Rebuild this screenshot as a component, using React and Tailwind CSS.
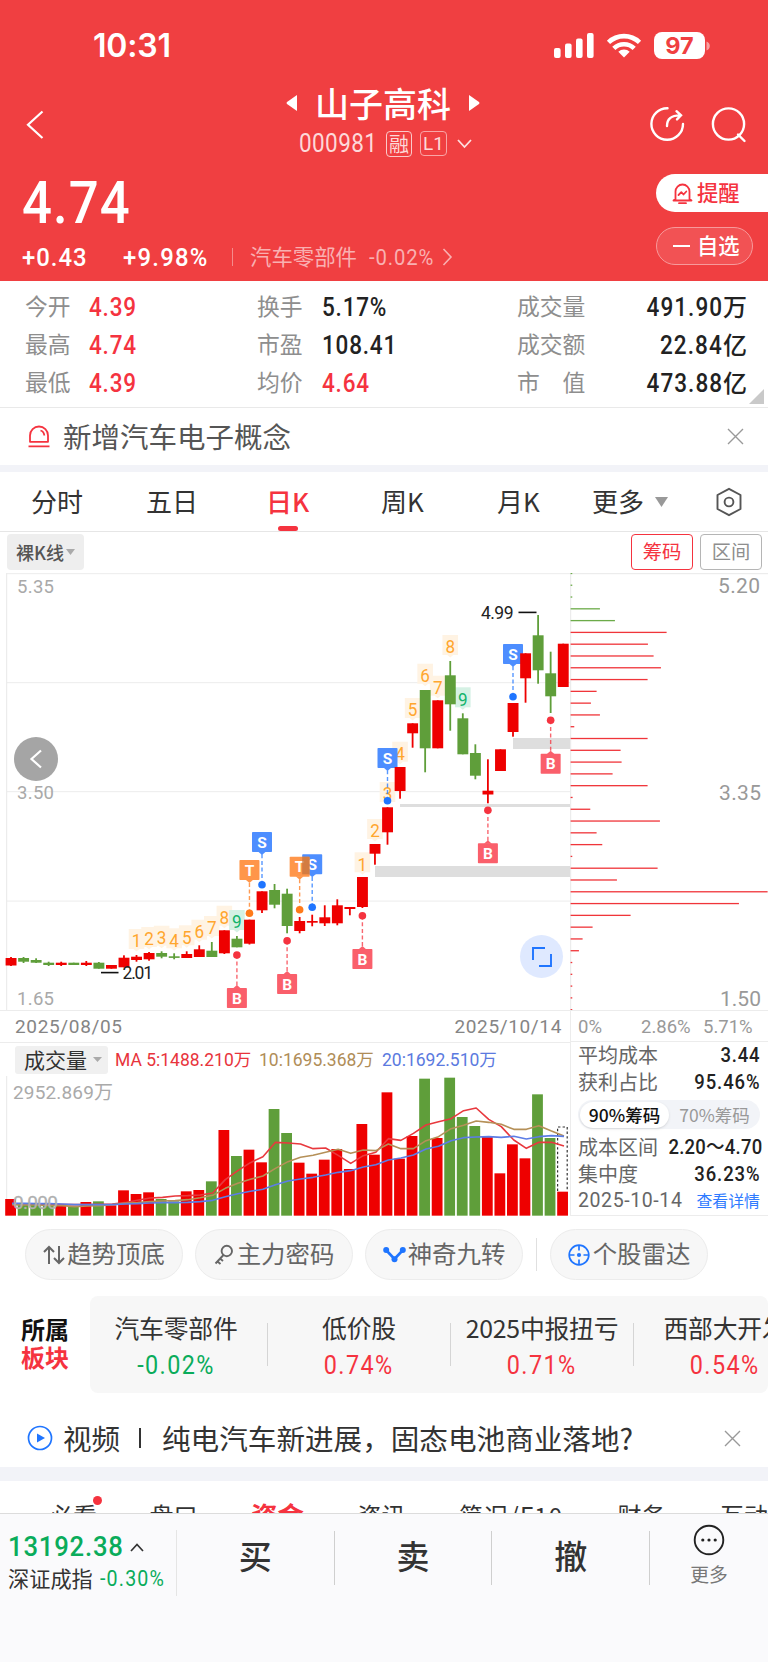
import React from "react";

const CN = "font-['Noto_Sans_CJK_SC',sans-serif]";
const NUM = "font-['Roboto','Noto_Sans_CJK_SC',sans-serif]";
const SLIM = "font-['Roboto','Noto_Sans_CJK_SC',sans-serif] origin-left scale-x-90 whitespace-nowrap";

const RED = "#ee0000";
const GREEN = "#5f9e3a";

// [direction, high, bodyTop, bodyBottom, low]
const candles = [
  ["r", 957, 958, 965.5, 966], ["g", 957, 958, 961.7, 963], ["g", 958.3, 960, 962.7, 963], ["g", 961.7, 962.7, 965, 966],
  ["r", 961.7, 962.7, 965, 966], ["g", 962.7, 962.7, 965, 965], ["r", 961, 962.7, 965, 966], ["g", 962, 962.7, 968.7, 968.7],
  ["r", 965, 965, 968.7, 968.7], ["r", 955.3, 957.7, 967.3, 967.3], ["r", 955, 956.7, 960, 961.7], ["r", 952, 953, 959.3, 960.7],
  ["g", 951.3, 953, 956.7, 958.3], ["g", 953.3, 956.3, 957.9, 959.3], ["r", 951.3, 954, 958, 958], ["r", 945.3, 949.3, 957, 957],
  ["g", 942, 950.7, 957, 957], ["r", 930.3, 930.3, 953.3, 954], ["g", 936, 938.7, 947.3, 947.3], ["r", 919.7, 919.7, 943.7, 944.5],
  ["r", 891.3, 891.3, 910.3, 913], ["g", 884, 890, 904.7, 908.3], ["g", 888.7, 893.7, 926, 933.3], ["r", 917, 921, 931, 933.3],
  ["r", 914.7, 921, 922.7, 926.3], ["r", 905.3, 917.3, 923.3, 926], ["r", 899.3, 905.3, 923.3, 925.3], ["r", 907, 907, 909, 915.3],
  ["r", 877, 877, 907, 908], ["r", 844, 844, 853.7, 864.7], ["r", 807.3, 807.3, 832.3, 844.7], ["r", 767, 767, 791, 798.7],
  ["r", 723.3, 723.3, 733.3, 747.7], ["g", 690, 690, 748.3, 772.3], ["r", 700.3, 700.3, 748.3, 748.3], ["g", 661, 675.3, 704.3, 730.7],
  ["g", 713.3, 718.3, 754.3, 754.3], ["g", 744.3, 753, 775.7, 779.3], ["r", 759.3, 790.7, 794.5, 803.3], ["r", 749.3, 749.3, 771, 771],
  ["r", 703, 703, 732, 736.7], ["r", 653.3, 653.3, 678.3, 702.7], ["g", 615, 635.3, 670.3, 683.7], ["g", 651.7, 673.3, 696.3, 713],
  ["r", 643.7, 643.7, 687, 687],
];

// [candle index, digit, top]
const counts = [
  [10, 1, 929], [11, 2, 927], [12, 3, 925.7], [13, 4, 928.3], [14, 5, 925.3], [15, 6, 919.7], [16, 7, 916], [17, 8, 905.7], [18, 9, 910],
  [28, 1, 852.3], [29, 2, 819], [30, 3, 782], [31, 4, 741.7], [32, 5, 698], [33, 6, 663.7], [34, 7, 675.7], [35, 8, 635], [36, 9, 687.3],
];

// [candle index, letter, top, dotY]
const badges = [
  [18, "B", 988, 955], [19, "T", 860, 913.3], [20, "S", 832, 884.7], [22, "B", 974, 940.7], [24, "S", 854.3, 907.3], [23, "T", 856.7, 909.7],
  [28, "B", 949, 915.7], [30, "S", 748, 800.7], [38, "B", 843.3, 810.3], [40, "S", 644, 696.7], [43, "B", 753.7, 720.3],
];
const badgeColor = { B: ["#fa5f6b", "#f5333f"], S: ["#4d8eff", "#1f75ff"], T: ["#ff964a", "#ff7a1a"] };

const cx = (i) => 11 + 12.55 * i;

function PriceChart() {
  return (
    <svg className="block font-['Roboto',sans-serif]" width="570" height="437" viewBox="0 573 570 437">
      {[573.5, 682.5, 791.5, 901].map((y) => (
        <rect key={y} x="6" y={y - 0.5} width="564" height="1.2" fill="#efefef" />
      ))}
      <rect x="6" y="573" width="1.2" height="437" fill="#ececec" />
      <rect x="375" y="866" width="195" height="11" fill="#dedede" />
      <rect x="400" y="804" width="170" height="3" fill="#dedede" />
      <rect x="513" y="738" width="57" height="11" fill="#dedede" />
      <g fill="#a9a9a9" fontSize="18.5">
        <text x="17" y="593.2" textLength="37">5.35</text>
        <text x="17" y="799.2" textLength="37">3.50</text>
        <text x="17" y="1005.2" textLength="37">1.65</text>
      </g>
      {counts.map(([i, n, top]) => (
        <g key={i}>
          <rect x={cx(i) - 7.8} y={top} width="15.6" height="20" fill={n === 9 ? "#d5f1e4" : "#fff3e3"} />
          <path d={`M${cx(i) - 3} ${top + 20}h6l-3 2.5z`} fill={n === 9 ? "#d5f1e4" : "#fff3e3"} />
        </g>
      ))}
      {counts.map(([i, n, top]) => (
        <g key={i} transform={`translate(${cx(i)} ${top + 18.3}) scale(0.9 1)`}>
          <text textAnchor="middle" fontSize="19" fill={n === 9 ? "#12b36b" : "#ffa62e"}>{n}</text>
        </g>
      ))}
      {badges.map(([i, k, top, dot]) => {
        const x = cx(i);
        const up = k === "B";
        return (
          <g key={i}>
            <line x1={x} x2={x} y1={dot} y2={up ? top : top + 20} stroke={badgeColor[k][1]} strokeOpacity=".75" strokeWidth="1.4" strokeDasharray="4 2.6" />
            <path d={up ? `M${x - 4} ${top + 0.5}l4-3.5l4 3.5z` : `M${x - 4} ${top + 19.5}l4 3.5l4-3.5z`} fill={badgeColor[k][0]} />
            <rect x={x - 10} y={top} width="20" height="20" rx="0.8" fill={badgeColor[k][0]} />
            <text x={x} y={top + 15.6} textAnchor="middle" fontSize="15.5" fontWeight="700" fill="#fff">{k}</text>
            <circle cx={x} cy={dot} r="3.8" fill={badgeColor[k][1]} />
          </g>
        );
      })}
      <rect x={cx(24) - 10} y="856.7" width="7.2" height="17.6" fill="#c8753f" fillOpacity=".8" />
      {candles.map(([d, h, t, b, l], i) => (
        <g key={i} fill={d === "r" ? RED : GREEN}>
          <rect x={cx(i) - 0.9} y={h} width="1.8" height={l - h} />
          <rect x={cx(i) - 5.4} y={t} width="10.9" height={b - t} />
        </g>
      ))}
      <rect x="518.5" y="611.6" width="18" height="1.6" fill="#111" />
      <text x="481" y="618.8" fontSize="17.5" textLength="32.5" fill="#222">4.99</text>
      <rect x="101" y="971.8" width="17.5" height="1.6" fill="#111" />
      <text x="122.5" y="979.4" fontSize="17.5" textLength="30.5" fill="#222">2.01</text>
    </svg>
  );
}

const chipEnds = [37, 37, 37, 120, 165, 320, 264, 281, 303, 263, 110, 93, 120, 43, 263, 182, 185, 158, 263, 38, 91, 300, 110, 127, 37, 293, 171, 623, 537, 212, 98, 68, 57, 37, 37, 37, 37, 37];

function ChipChart() {
  return (
    <svg className="block font-['Roboto',sans-serif]" width="198" height="437" viewBox="570 573 198 437">
      <rect x="570" y="573" width="198" height="1.2" fill="#ececec" />
      <rect x="570" y="573" width="1.2" height="437" fill="#ececec" />
      {chipEnds.map((e, i) => (
        <rect key={i} x="570.6" y={572.8 + i * 11.79} width={(e - 32) / 3} height="1.3" fill={i < 5 ? "#6cab49" : "#f0353a"} />
      ))}
      <g fill="#999" fontSize="21">
        <text x="718" y="593.4" textLength="42">5.20</text>
        <text x="719" y="799.7" textLength="42">3.35</text>
        <text x="720" y="1005.8" textLength="41">1.50</text>
      </g>
    </svg>
  );
}

const volumes = [567, 585, 583, 585, 588, 590, 576, 574, 586, 541, 552, 547, 567, 574, 544, 540, 514, 360, 438, 419, 457, 297, 369, 458, 491, 449, 417, 477, 342, 434, 247, 446, 378, 206, 384, 203, 321, 348, 380, 490, 403, 445, 253, 384, 545];
const ma5 = [582, 582, 582, 583, 584, 584, 584, 583, 582, 578, 571, 564, 562, 558, 557, 555, 549, 509, 482, 458, 440, 397, 399, 402, 416, 414, 436, 460, 437, 427, 386, 391, 370, 345, 335, 326, 302, 294, 328, 350, 390, 415, 397, 397, 408];
const ma10 = [584, 585, 585, 586, 587, 590, 588, 587, 584, 580, 578, 575, 573, 572, 569, 563, 556, 535, 520, 508, 498, 475, 455, 442, 436, 427, 418, 430, 420, 422, 402, 416, 416, 392, 380, 356, 346, 333, 337, 343, 358, 358, 347, 363, 378];
const ma20 = [580, 580, 581, 581, 582, 584, 584, 584, 584, 582, 581, 579, 578, 578, 577, 575, 571, 560, 551, 544, 538, 524, 513, 507, 502, 495, 487, 482, 471, 464, 450, 444, 435, 417, 409, 392, 383, 381, 380, 382, 379, 387, 380, 377, 379];
const vx = (i) => 10.5 + 12.545 * i;
const line = (a) => a.map((v, i) => `${vx(i) + 1.5},${1010 + v / 3}`).join(" ");

function VolumeChart() {
  return (
    <svg className="block font-['Roboto','Noto_Sans_CJK_SC',sans-serif]" width="570" height="140" viewBox="0 1076 570 140">
      <rect x="6" y="1076" width="1.2" height="140" fill="#ececec" />
      <text x="13" y="1098.6" fontSize="19" textLength="100" fill="#aaa">2952.869万</text>
      {volumes.map((v, i) => (
        <rect key={i} x={vx(i) - 5.3} y={1010 + v / 3} width="10.8" height={(617 - v) / 3} fill={candles[i][0] === "r" ? RED : GREEN} />
      ))}
      <path d="M557.6 1191V1127h9.6v64" fill="none" stroke="#333" strokeWidth="1.2" strokeDasharray="2.4 2.2" />
      <g fill="none" strokeWidth="1.6" strokeLinejoin="round">
        <polyline points={line(ma5)} stroke="#e8393e" />
        <polyline points={line(ma10)} stroke="#b59058" />
        <polyline points={line(ma20)} stroke="#5c7de6" />
      </g>
      <text x="13" y="1209" fontSize="19" textLength="45" fill="#b0b0b0" stroke="#b0b0b0" strokeWidth="0.3">0.000</text>
    </svg>
  );
}

function Header() {
  return (
    <header className="flex h-[281px] shrink-0 flex-col bg-[#f03f41] text-white">
      <div className="flex h-[85px] items-center pt-[6px] pr-[58px] pl-[93px]">
        <span className="font-['Inter',sans-serif] text-[32px] leading-none font-semibold tracking-[-0.2px]">10:31</span>
        <svg className="ml-auto" width="156" height="28" viewBox="553 32 156 28" fill="#fff">
          <rect x="553" y="48" width="6.6" height="10" rx="2" />
          <rect x="564" y="43.5" width="6.6" height="14.5" rx="2" />
          <rect x="575" y="38.5" width="6.6" height="19.5" rx="2" />
          <rect x="586" y="33" width="6.6" height="25" rx="2" />
          <g fill="none" stroke="#fff" strokeWidth="4.6">
            <path d="M607.5 42.3A22.5 22.5 0 0 1 638.5 42.3" />
            <path d="M612.8 48.3A14.8 14.8 0 0 1 633.2 48.3" />
          </g>
          <path d="M623 57.6L617.3 51.8A8.2 8.2 0 0 1 628.7 51.8Z" />
          <rect x="653" y="32" width="51" height="27" rx="8" />
          <path d="M705.5 41.5c4.4 1 4.4 8 0 9z" opacity=".5" />
          <text x="678.5" y="54" textAnchor="middle" fontSize="23.5" fontWeight="700" fill="#f03f41" className="font-['Inter',sans-serif]">97</text>
        </svg>
      </div>
      <div className="flex h-[80px] items-start">
        <svg className="mt-[24px] ml-[24px]" width="22" height="32" fill="none" stroke="#fff" strokeWidth="2.2"><path d="M18.5 2.5L4 15.7L18.5 29" /></svg>
        <div className="ml-[217px] flex w-[240px] flex-col items-center">
          <div className="flex h-[35px] w-[194px] items-center justify-between">
            <svg width="11" height="16" fill="#fff"><path d="M11 0V16L1 9q-1-1 0-2z" /></svg>
            <span className={`${CN} text-[34px] leading-none font-medium whitespace-nowrap`}>山子高科</span>
            <svg width="11" height="16" fill="#fff"><path d="M0 0V16L10 9q1-1 0-2z" /></svg>
          </div>
          <div className="mt-[10px] flex h-[27px] items-center pl-[5px] text-[#fdd9d9]">
            <span className={`${SLIM} w-[87px] text-[25px] leading-none tracking-[0.45px]`}>000981</span>
            <span className={`${CN} flex h-[26px] w-[26px] items-center justify-center rounded-[4px] border border-[#fbc9c9] text-[20px] leading-none`}>融</span>
            <span className={`${NUM} ml-[8px] flex h-[25px] w-[27px] items-center justify-center rounded-[4px] border border-[#f9a5a6] text-[19px] leading-none`}>L1</span>
            <svg className="ml-[10px]" width="15" height="10" fill="none" stroke="#fde0e0" strokeWidth="1.8"><path d="M1 1L7.5 8L14 1" /></svg>
          </div>
        </div>
        <svg className="mt-[20px] ml-[145px]" width="100" height="38" viewBox="648 105 100 38" fill="none" stroke="#fff" strokeWidth="2.4" strokeLinecap="round">
          <path d="M667.5 108.2A15.8 15.8 0 1 0 683 124" />
          <path d="M667 126C667 119 671 115.4 680 115.4M676.5 111.2L681 115.4L677 119.4" />
          <circle cx="728.5" cy="124" r="15.6" />
          <path d="M738 134.5L744.5 141" />
        </svg>
      </div>
      <div className="flex flex-1">
        <div className="flex flex-1 flex-col">
          <span className={`${SLIM} mt-[9px] ml-[22px] text-[58.5px] leading-[58px] font-medium tracking-[1.2px]`}>4.74</span>
          <div className="mt-[11px] flex h-[28px] items-center pl-[22px]">
            <span className={`${SLIM} w-[101px] text-[26.5px] leading-none font-medium tracking-[1.1px]`}>+0.43</span>
            <span className={`${SLIM} w-[109px] text-[26.5px] leading-none font-medium tracking-[1.4px]`}>+9.98%</span>
            <span className="h-[18px] w-px bg-[#f58b8c]" />
            <span className={`${CN} ml-[17px] w-[119px] pb-[2px] text-[21.4px] leading-none whitespace-nowrap text-[#f9b0b1]`}>汽车零部件</span>
            <span className={`${SLIM} w-[73px] text-[22.5px] leading-none tracking-[1px] text-[#f9b0b1]`}>-0.02%</span>
            <svg width="11" height="18" fill="none" stroke="#f9b0b1" strokeWidth="1.6"><path d="M1.5 1L9 9L1.5 17" /></svg>
          </div>
        </div>
        <div className="mt-[9px] flex w-[112px] flex-col gap-[15px]">
          <div className="flex h-[38px] items-center rounded-l-full bg-white pl-[16px] text-[#f5333f]">
            <svg width="21" height="23" viewBox="0 0 21 23" fill="none" stroke="#f5333f" strokeWidth="1.8" strokeLinecap="round" strokeLinejoin="round">
              <path d="M3.5 17V9.5A7 7 0 0 1 17.5 9.5V17L19.5 18.5H1.5Z" /><path d="M7 21.2H14" /><path d="M6.5 13L9.3 10.2L11.5 12.5L14.3 9.5" />
            </svg>
            <span className={`${CN} ml-[4px] pb-[2px] text-[21.3px] leading-none font-medium`}>提醒</span>
          </div>
          <div className="flex h-[38px] w-[97px] items-center rounded-full border border-[#f79a9b] bg-[#f25254] pl-[16px]">
            <span className="h-[2px] w-[17px] bg-white" />
            <span className={`${CN} ml-[7px] pb-[2px] text-[21.3px] leading-none font-medium`}>自选</span>
          </div>
        </div>
      </div>
    </header>
  );
}

const stats = [
  ["今开", "4.39", true, "换手", "5.17%", false, "成交量", "491.90", "万"],
  ["最高", "4.74", true, "市盈", "108.41", false, "成交额", "22.84", "亿"],
  ["最低", "4.39", true, "均价", "4.64", true, "市　值", "473.88", "亿"],
];

function Stats() {
  return (
    <section className="relative flex h-[127px] shrink-0 flex-col border-b border-[#e9e9e9] pt-[6px]">
      {stats.map((r, i) => (
        <div key={i} className="flex h-[38px] items-center pr-[21px] pl-[25px] whitespace-nowrap">
          <span className={`${CN} w-[64px] text-[22.8px] leading-none text-[#8e8e8e]`}>{r[0]}</span>
          <span className={`${SLIM} w-[168px] pt-[2px] text-[25px] leading-none font-medium tracking-[0.9px] ${r[2] ? "text-[#f5333f]" : "text-[#222]"}`}>{r[1]}</span>
          <span className={`${CN} w-[65px] text-[22.8px] leading-none text-[#8e8e8e]`}>{r[3]}</span>
          <span className={`${SLIM} w-[195px] pt-[2px] text-[25px] leading-none font-medium tracking-[0.9px] ${r[5] ? "text-[#f5333f]" : "text-[#222]"}`}>{r[4]}</span>
          <span className={`${CN} text-[22.8px] leading-none text-[#8e8e8e]`}>{r[6]}</span>
          <span className="ml-auto flex items-center leading-none text-[#222]">
            <span className="origin-right scale-x-90 pt-[2px] font-['Roboto',sans-serif] text-[25px] font-medium tracking-[1.2px]">{r[7]}</span>
            <span className={`${CN} text-[24px] font-medium`}>{r[8]}</span>
          </span>
        </div>
      ))}
      <svg className="absolute right-[4px] bottom-[3px]" width="15" height="15" fill="#c9c9c9"><path d="M15 0V15H0Z" /></svg>
    </section>
  );
}

function Cross() {
  return <svg width="17" height="17" fill="none" stroke="#999" strokeWidth="1.4"><path d="M1 1L16 16M16 1L1 16" /></svg>;
}

function Tabs() {
  const t = `${CN} text-[26px] leading-none text-[#333] whitespace-nowrap pb-[2px]`;
  return (
    <nav className="flex h-[60px] shrink-0 items-center border-b border-[#e6e6e6] pl-[31px]">
      <span className={`${t} w-[115px]`}>分时</span>
      <span className={`${t} w-[120px]`}>五日</span>
      <span className="relative flex h-full w-[115px] items-center">
        <span className={`${CN} pb-[2px] text-[26px] leading-none font-medium text-[#f5333f]`}>日K</span>
        <span className="absolute bottom-0 left-[12px] h-[5px] w-[20px] rounded-[2.5px] bg-[#f5333f]" />
      </span>
      <span className={`${t} w-[116px]`}>周K</span>
      <span className={`${t} w-[95px]`}>月K</span>
      <span className={`${t} w-[63px]`}>更多</span>
      <svg width="13" height="10" fill="#999"><path d="M0 0H13L6.5 10Z" /></svg>
      <svg className="ml-[47px]" width="28" height="30" viewBox="0 0 28 30" fill="none" stroke="#555" strokeWidth="1.9" strokeLinejoin="round">
        <path d="M14 1.8L25.5 8V22L14 28.2L2.5 22V8Z" /><circle cx="14" cy="15" r="4.4" />
      </svg>
    </nav>
  );
}

function ChipPanel() {
  const label = `${CN} pb-[1px] text-[20px] leading-none text-[#666]`;
  const val = "font-['Roboto','Noto_Sans_CJK_SC',sans-serif] origin-right scale-x-90 text-[20.5px] leading-none font-medium text-[#222]";
  return (
    <div className="flex h-[174px] flex-col border-b border-l border-[#ececec] pr-[8px] pl-[7px] whitespace-nowrap">
      <div className="flex h-[27px] items-center justify-between"><span className={label}>平均成本</span><span className={`${val} tracking-[0.9px]`}>3.44</span></div>
      <div className="flex h-[27px] items-center justify-between"><span className={label}>获利占比</span><span className={`${val} tracking-[1px]`}>95.46%</span></div>
      <div className={`${CN} my-[5px] flex h-[29px] items-center rounded-full bg-[#f2f4f8] text-[17.5px] leading-none`}>
        <span className="ml-[2px] flex h-[26px] w-[89px] items-center justify-center rounded-full bg-white font-medium text-[#111] shadow-sm">90%筹码</span>
        <span className="flex flex-1 items-center justify-center text-[#999]">70%筹码</span>
      </div>
      <div className="flex h-[27px] items-center justify-between"><span className={label}>成本区间</span><span className={`${val} tracking-[0.3px]`}>2.20～4.70</span></div>
      <div className="flex h-[27px] items-center justify-between"><span className={label}>集中度</span><span className={`${val} tracking-[1px]`}>36.23%</span></div>
      <div className="flex h-[28px] items-center justify-between">
        <span className={`${NUM} text-[19.5px] leading-none tracking-[0.6px] text-[#666]`}>2025-10-14</span>
        <span className={`${CN} text-[15.9px] leading-none text-[#2f7bff]`}>查看详情</span>
      </div>
    </div>
  );
}

const pill = `${CN} flex h-[51px] w-[158px] items-center justify-center rounded-full border border-[#ececec] bg-[#f7f7f7] text-[24.4px] leading-none text-[#666] whitespace-nowrap`;

function Tools() {
  return (
    <section className="flex h-[80px] shrink-0 items-center pb-[3px] pl-[25px]">
      <span className={pill}>
        <svg className="mr-[2px]" width="22" height="20" fill="none" stroke="#666" strokeWidth="2"><path d="M6 19V2M1 7L6 2L11 7M16 1V18M11 13L16 18L21 13" /></svg><span className="pb-[2px]">趋势顶底</span>
      </span>
      <span className={`${pill} ml-[12px]`}>
        <svg className="mr-[3px]" width="20" height="21" fill="none" stroke="#666" strokeWidth="1.9"><circle cx="12.8" cy="7" r="5.2" /><path d="M9.5 11L1.5 19.5M3.5 17.5L6.5 20M6 14.5L9 17" /></svg><span className="pb-[2px]">主力密码</span>
      </span>
      <span className={`${pill} ml-[12px]`}>
        <svg className="mr-[2px]" width="23" height="17" fill="none" stroke="#1f75ff" strokeWidth="2.6"><path d="M3.5 4.5L11.5 13L19.5 4.5" /><g fill="#1f75ff" stroke="none"><circle cx="3.2" cy="4" r="3" /><circle cx="19.8" cy="4" r="3" /><circle cx="11.5" cy="13.2" r="3" /></g></svg><span className="pb-[2px]">神奇九转</span>
      </span>
      <span className="mx-[13px] h-[33px] w-px bg-[#e0e0e0]" />
      <span className={pill}>
        <svg className="mr-[3px]" width="22" height="22" fill="none" stroke="#1f75ff" strokeWidth="1.7"><circle cx="11" cy="11" r="9.8" /><path d="M11 1V6.5M11 15.5V21M1 11H6.5M15.5 11H21" /><circle cx="11" cy="11" r="2.1" fill="#1f75ff" stroke="none" /></svg><span className="pb-[2px]">个股雷达</span>
      </span>
    </section>
  );
}

const sectors = [["汽车零部件", "-0.02%", false], ["低价股", "0.74%", true], ["2025中报扭亏", "0.71%", true], ["西部大开发", "0.54%", true]];

function Sectors() {
  return (
    <section className="flex h-[97px] shrink-0 overflow-hidden">
      <div className={`${CN} flex w-[90px] flex-col justify-center pb-[3px] pl-[21px] text-[24px] leading-[28px] font-bold`}>
        <span className="text-[#111]">所属</span><span className="text-[#f5333f]">板块</span>
      </div>
      <div className="flex w-[678px] overflow-hidden rounded-[8px] bg-[#f7f7f7]">
        <div className="-ml-[5px] flex">
          {sectors.map(([n, v, up], i) => (
            <div key={n} className="flex w-[183px] shrink-0 items-center">
              <div className="flex w-[182px] flex-col items-center pt-[3px] whitespace-nowrap">
                <span className={`${CN} text-[24.8px] leading-[30px] tracking-[-0.2px] text-[#333]`}>{n}</span>
                <span className={`mt-[8px] scale-x-90 font-['Roboto',sans-serif] text-[26px] leading-[30px] tracking-[1.5px] ${up ? "text-[#f5333f]" : "text-[#0aac5b]"}`}>{v}</span>
              </div>
              {i < 3 && <span className="h-[43px] w-px bg-[#d5d5d5]" />}
            </div>
          ))}
        </div>
      </div>
    </section>
  );
}

function BottomTabs() {
  const t = `${CN} text-[24px] leading-[26px] text-[#333] whitespace-nowrap`;
  return (
    <nav className="flex h-[32px] shrink-0 items-start overflow-hidden pt-[21px] pl-[49px]">
      <span className={`${t} relative w-[102px]`}>必看<span className="absolute -top-[6px] left-[44px] h-[9px] w-[9px] rounded-full bg-[#f5333f]" /></span>
      <span className={`${t} w-[103px]`}>盘口</span>
      <span className={`${CN} w-[108px] text-[26.5px] leading-[26px] font-bold text-[#f5333f]`}>资金</span>
      <span className={`${t} w-[103px]`}>资讯</span>
      <span className={`${t} w-[161px] tracking-[1.2px]`}>简况/F10</span>
      <span className={`${t} w-[104px]`}>财务</span>
      <span className={t}>互动</span>
    </nav>
  );
}

function BottomBar() {
  const act = `${CN} flex flex-1 items-center justify-center border-r border-[#cfcfcf] pb-[6px] text-[33px] leading-none font-medium text-[#333]`;
  return (
    <footer className="flex flex-1 items-start border-t border-[#dcdcdc] bg-[#fafafc]">
      <div className="mt-[16px] flex h-[66px] w-[177px] flex-col border-r border-[#e5e5e5] pl-[8px]">
        <div className="flex h-[34px] items-center">
          <span className={`${SLIM} w-[122px] text-[28.5px] leading-none font-medium tracking-[0.9px] text-[#0aac5b]`}>13192.38</span>
          <svg width="14" height="9" fill="none" stroke="#333" strokeWidth="1.7"><path d="M1 8L7 1.5L13 8" /></svg>
        </div>
        <div className="flex h-[30px] items-center whitespace-nowrap">
          <span className={`${CN} w-[92px] pb-[2px] text-[21.2px] leading-none text-[#333]`}>深证成指</span>
          <span className={`${SLIM} text-[21.8px] leading-none tracking-[1.3px] text-[#0aac5b]`}>-0.30%</span>
        </div>
      </div>
      <div className="mt-[17px] flex h-[54px] w-[473px]">
        <span className={act}>买</span><span className={act}>卖</span><span className={act}>撤</span>
      </div>
      <div className="mt-[10px] flex flex-1 flex-col items-center">
        <svg width="32" height="32" fill="none" stroke="#222" strokeWidth="1.9"><circle cx="16" cy="16" r="14.3" /><g fill="#222" stroke="none"><circle cx="9.8" cy="16" r="1.6" /><circle cx="16" cy="16" r="1.6" /><circle cx="22.2" cy="16" r="1.6" /></g></svg>
        <span className={`${CN} mt-[9px] text-[18.8px] leading-none text-[#777]`}>更多</span>
      </div>
    </footer>
  );
}

export default function App() {
  const box = `${CN} flex h-[36px] w-[62px] items-center justify-center rounded-[4px] border pb-[1px] text-[19.3px] leading-none`;
  return (
    <div className="flex h-[1662px] w-[768px] flex-col overflow-hidden bg-white">
      <Header />
      <Stats />
      <section className="flex h-[57px] shrink-0 items-center pr-[24px] pl-[28px]">
        <svg width="22" height="23" fill="none" stroke="#f5333f" strokeWidth="1.8"><path d="M2 16.8V10.5A9 9 0 0 1 20 10.5V16.8Z" strokeLinejoin="round" /><path d="M12.5 5.5Q16 6.5 16.3 10.5M0.5 21.4H21.5" /></svg>
        <span className={`${CN} ml-[13px] flex-1 text-[28.5px] leading-none text-[#555]`}>新增汽车电子概念</span>
        <Cross />
      </section>
      <div className="h-[7px] shrink-0 bg-[#f2f3f8]" />
      <Tabs />
      <div className="flex h-[41px] shrink-0 items-start pt-[2px] pr-[6px] pl-[7px]">
        <span className={`${CN} flex h-[36px] w-[77px] items-center rounded-[4px] bg-[#eeeeee] pl-[9px] text-[18px] leading-none font-medium text-[#555]`}>
          裸K线<svg className="ml-[2px]" width="9" height="6" fill="#aaa"><path d="M0 0H9L4.5 6Z" /></svg>
        </span>
        <span className={`${box} ml-auto border-[#f5333f] text-[#f5333f]`}>筹码</span>
        <span className={`${box} ml-[7px] border-[#b5b5b5] text-[#8e8e8e]`}>区间</span>
      </div>
      <section className="flex h-[643px] shrink-0">
        <div className="relative flex w-[570px] flex-col">
          <PriceChart />
          <button className="absolute top-[164px] left-[14px] flex h-[44px] w-[44px] items-center justify-center rounded-full bg-[#a5a5a5]">
            <svg width="14" height="20" fill="none" stroke="#fff" strokeWidth="2.2"><path d="M12 1.5L2.5 10L12 18.5" /></svg>
          </button>
          <button className="absolute top-[362px] left-[520px] flex h-[43px] w-[43px] items-center justify-center rounded-full bg-[#dfe9ff]">
            <svg width="20" height="20" fill="none" stroke="#1f75ff" strokeWidth="1.9"><path d="M1 13V1H13M7 19H19V7" /></svg>
          </button>
          <div className={`${NUM} flex h-[32px] items-center justify-between border-t border-[#ececec] pr-[8px] pl-[15px] text-[19px] leading-none tracking-[0.65px] text-[#858585]`}>
            <span>2025/08/05</span><span>2025/10/14</span>
          </div>
          <div className={`${NUM} flex h-[34px] items-center border-t border-[#ececec] pl-[15px] text-[17.5px] leading-none whitespace-nowrap`}>
            <span className={`${CN} flex h-[28px] w-[93px] items-center rounded-[3px] bg-[#f0f0f0] pl-[9px] text-[21px] leading-none text-[#333]`}>
              成交量<svg className="ml-[6px]" width="9" height="5" fill="#aaa"><path d="M0 0H9L4.5 5Z" /></svg>
            </span>
            <span className="ml-[7px] w-[144px] pt-[2px] text-[#e8343c]">MA 5:1488.210万</span>
            <span className="w-[123px] pt-[2px] text-[#b08d57]">10:1695.368万</span>
            <span className="pt-[2px] text-[#5b7ae0]">20:1692.510万</span>
          </div>
          <VolumeChart />
        </div>
        <div className="flex w-[198px] flex-col">
          <ChipChart />
          <div className={`${NUM} flex h-[32px] items-center border-y border-l border-[#ececec] pt-[2px] pl-[7px] text-[18.5px] leading-none text-[#999]`}>
            <span className="w-[63px]">0%</span><span className="w-[62px]">2.86%</span><span>5.71%</span>
          </div>
          <ChipPanel />
        </div>
      </section>
      <Tools />
      <Sectors />
      <section className="flex h-[74px] shrink-0 items-center pt-[16px] pr-[27px] pl-[27px]">
        <svg width="26" height="26" fill="none" stroke="#1f75ff" strokeWidth="1.7"><circle cx="13" cy="13" r="11.5" /><path d="M10 8.5L18 13L10 17.5Z" fill="#1f75ff" stroke="none" /></svg>
        <span className={`${CN} ml-[10px] flex flex-1 items-center text-[28.6px] leading-none whitespace-nowrap text-[#333]`}>
          <span className="w-[76px]">视频</span><span className="h-[20px] w-[2px] bg-[#333]" /><span className="ml-[21px]">纯电汽车新进展，固态电池商业落地?</span>
        </span>
        <Cross />
      </section>
      <div className="h-[14px] shrink-0 bg-[#f2f3f8]" />
      <BottomTabs />
      <BottomBar />
    </div>
  );
}
